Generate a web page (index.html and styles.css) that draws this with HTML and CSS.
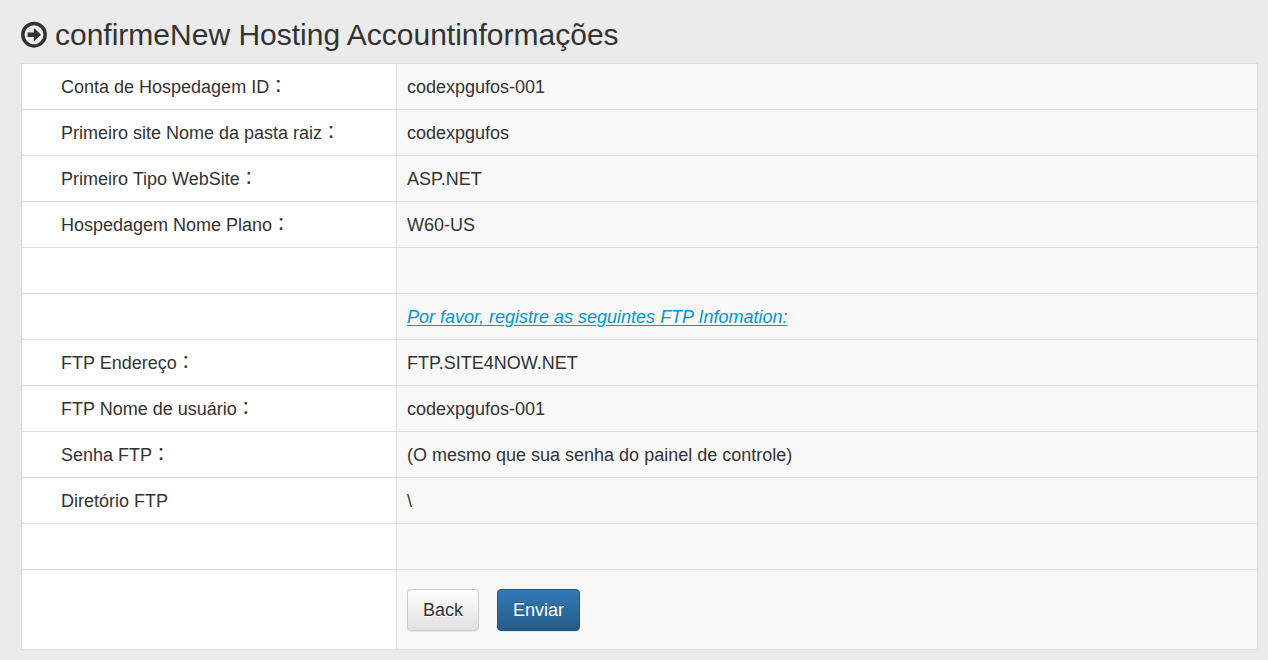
FILE: index.html
```html
<!DOCTYPE html>
<html lang="pt">
<head>
<meta charset="utf-8">
<title>New Hosting Account</title>
<link rel="stylesheet" href="styles.css">
</head>
<body>
<main class="page">
<h1 class="title">
<svg class="title-icon" viewBox="0 0 26 26" aria-hidden="true"><circle cx="13" cy="12.7" r="11.2" fill="none" stroke="#333" stroke-width="3.5"/><path d="M6.6 10.5h6.2V7.2q0-1.2 1-.4l5.6 5.2q.7.7 0 1.4l-5.6 5.2q-1 .8-1-.4V15H6.6z" fill="#333"/></svg>
<span>confirmeNew Hosting Accountinformações</span>
</h1>
<form>
<table class="info">
<tbody>
<tr><th scope="row">Conta de Hospedagem ID：</th><td>codexpgufos-001</td></tr>
<tr><th scope="row">Primeiro site Nome da pasta raiz：</th><td>codexpgufos</td></tr>
<tr><th scope="row">Primeiro Tipo WebSite：</th><td>ASP.NET</td></tr>
<tr><th scope="row">Hospedagem Nome Plano：</th><td>W60-US</td></tr>
<tr><th></th><td></td></tr>
<tr><th></th><td><a class="note" href="#">Por favor, registre as seguintes FTP Infomation:</a></td></tr>
<tr><th scope="row">FTP Endereço：</th><td>FTP.SITE4NOW.NET</td></tr>
<tr><th scope="row">FTP Nome de usuário：</th><td>codexpgufos-001</td></tr>
<tr><th scope="row">Senha FTP：</th><td>(O mesmo que sua senha do painel de controle)</td></tr>
<tr><th scope="row">Diretório FTP</th><td>\</td></tr>
<tr><th></th><td></td></tr>
<tr><th></th><td><div class="actions"><button class="btn" type="button">Back</button><button class="btn btn-primary" type="submit">Enviar</button></div></td></tr>
</tbody>
</table>
</form>
</main>
</body>
</html>
```
FILE: styles.css
```css
* { box-sizing: border-box; }
body {
  margin: 0;
  background: #ebebeb;
  color: #333;
  font: 18px/25px "Liberation Sans", Arial, "Noto Sans CJK JP", sans-serif;
}
.page { padding: 13px 10px 10px 21px; }
.title {
  display: flex;
  align-items: center;
  gap: 8px;
  margin: 0 0 7px;
  font-size: 30px;
  line-height: 43px;
  font-weight: 400;
}
.title-icon { width: 26px; height: 26px; flex: none; overflow: visible; }
.info {
  width: 100%;
  border-collapse: collapse;
  table-layout: fixed;
  background: #f8f8f8;
}
.info th, .info td {
  height: 46px;
  padding: 11px 10px 9px;
  border: 1px solid #ddd;
  text-align: left;
  vertical-align: middle;
  font-weight: 400;
}
.info th {
  width: 375px;
  padding-left: 39px;
  background: #fff;
}
.note {
  color: #0099d8;
  font-style: italic;
  text-decoration: underline;
  text-underline-offset: 2px;
}
.actions { display: flex; gap: 18px; padding: 8px 0 9px; }
.btn {
  height: 42px;
  padding: 0 15px;
  border: 1px solid #ccc;
  border-radius: 4px;
  background: linear-gradient(#fff, #e0e0e0);
  color: #333;
  font: inherit;
  text-shadow: 0 1px 0 #fff;
  box-shadow: 0 1px 1px rgba(0, 0, 0, .08);
}
.btn-primary {
  border-color: #245580;
  background: linear-gradient(#337ab7, #265a88);
  color: #fff;
  text-shadow: 0 -1px 0 rgba(0, 0, 0, .2);
}
```
